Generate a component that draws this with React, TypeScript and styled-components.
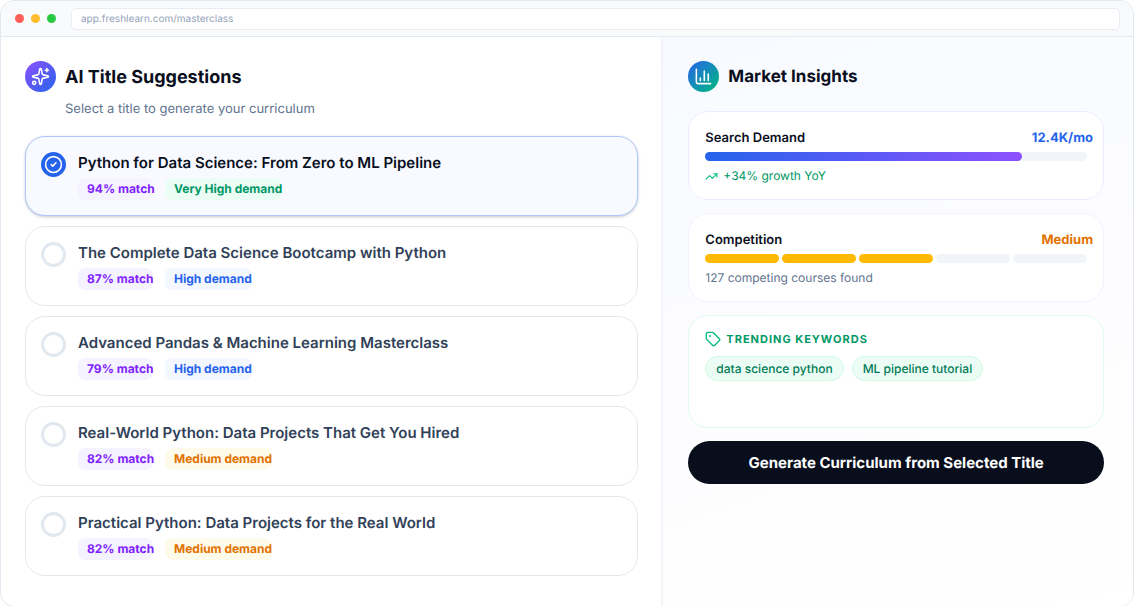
import React, { useState } from "react";
import styled, { createGlobalStyle } from "styled-components";
import { ChartColumn, CircleCheck, Sparkles, Tag, TrendingUp } from "lucide-react";

const GlobalStyle = createGlobalStyle`
  *, *::before, *::after { box-sizing: border-box; }
  body {
    margin: 0;
    background: #fff;
    color: #0a0f1e;
    font-family: Inter, "Liberation Sans", sans-serif;
    text-rendering: geometricPrecision;
  }
  h1, h2, h3, p, ul, fieldset { margin: 0; padding: 0; border: 0; }
  button, input { font-family: inherit; text-rendering: inherit; }
`;

const Window = styled.div`
  display: flex;
  flex-direction: column;
  min-height: 100vh;
  border: 1px solid #e2e8f0;
  border-radius: 14px;
  overflow: hidden;
`;

const BrowserBar = styled.header`
  display: flex;
  align-items: center;
  gap: 15px;
  height: 36px;
  padding: 0 13px 0 14px;
  background: #f8fafc;
  border-bottom: 1px solid #e2e8f0;
`;

const Lights = styled.div`
  display: flex;
  gap: 7px;
`;

const Light = styled.span<{ $color: string }>`
  width: 9px;
  height: 9px;
  border-radius: 50%;
  background: ${(p) => p.$color};
`;

const Address = styled.input`
  flex: 1;
  min-width: 0;
  height: 22px;
  padding: 0 9px;
  border: 1px solid #e8edf3;
  border-radius: 5px;
  background: #fff;
  color: #94a3b8;
  font-size: 10px;
  outline: none;
`;

const Columns = styled.main`
  flex: 1;
  display: grid;
  grid-template-columns: minmax(0, 7fr) minmax(0, 5fr);
`;

const TitlesPanel = styled.section`
  padding: 24px 23px 30px 24px;
`;

const InsightsPanel = styled.section`
  display: flex;
  flex-direction: column;
  padding: 24px 29px 24px 25px;
  border-left: 2px solid #f1f5f9;
  background: linear-gradient(160deg, #f8faff 0%, #fdfdff 60%, #fff 100%);
`;

const PanelHeader = styled.div`
  display: flex;
  align-items: center;
  gap: 9px;
  height: 31px;
`;

const PanelIcon = styled.span<{ $from: string; $to: string }>`
  display: grid;
  place-items: center;
  width: 31px;
  height: 31px;
  border-radius: 50%;
  color: #fff;
  background: linear-gradient(135deg, ${(p) => p.$from}, ${(p) => p.$to});
`;

const TitlesHeading = styled.h1`
  padding-top: 2px;
  font-size: 18px;
  line-height: 31px;
  font-weight: 700;
`;

const InsightsHeading = styled.h2`
  padding-top: 2px;
  font-size: 17px;
  line-height: 31px;
  font-weight: 700;
`;

const Subtitle = styled.p`
  margin: 7px 0 17px 40px;
  font-size: 13px;
  line-height: 20px;
  color: #62748e;
`;

const Options = styled.fieldset`
  display: flex;
  flex-direction: column;
  gap: 10px;
  min-width: 0;
`;

const OptionCard = styled.label<{ $selected: boolean }>`
  display: flex;
  gap: 12px;
  height: 80px;
  padding: 15px;
  border: 1px solid ${(p) => (p.$selected ? "#b0c6fb" : "#e2e8f0")};
  border-radius: 20px;
  background: ${(p) => (p.$selected ? "#f8faff" : "#fff")};
  color: ${(p) => (p.$selected ? "#0a0f1e" : "#314158")};
  box-shadow: ${(p) => (p.$selected ? "0 1px 3px rgba(15, 23, 42, 0.24)" : "none")};
  cursor: pointer;
`;

const RadioWrap = styled.span`
  position: relative;
  flex: none;
  width: 25px;
  height: 25px;

  svg {
    position: absolute;
    inset: 3px;
    color: #fff;
    pointer-events: none;
  }
`;

const Radio = styled.input`
  appearance: none;
  display: block;
  width: 25px;
  height: 25px;
  margin: 0;
  border: 3px solid #e2e8f0;
  border-radius: 50%;
  background: #fff;
  cursor: pointer;

  &:checked {
    border-color: #2563eb;
    background: #2563eb;
  }
`;

const OptionTitle = styled.span`
  display: block;
  font-size: 15px;
  line-height: 22px;
  font-weight: 600;
`;

const Badges = styled.span`
  display: flex;
  gap: 12px;
  margin-top: 4px;
`;

const Badge = styled.span<{ $tone: Tone }>`
  height: 22px;
  padding: 0 0 0 9px;
  border-radius: 7px;
  font-size: 12px;
  line-height: 22px;
  font-weight: 700;
  white-space: nowrap;
  color: ${(p) => tones[p.$tone].text};
  background: ${(p) => tones[p.$tone].fill};
`;

const MatchBadge = styled(Badge)`
  width: 75px;
`;

const Cards = styled.div`
  display: flex;
  flex-direction: column;
  gap: 13px;
  margin-top: 19px;
`;

const InsightCard = styled.article<{ $border: string }>`
  min-height: 89px;
  padding: 15px 16px 11px;
  border: 1px solid ${(p) => p.$border};
  border-radius: 20px;
  background: #fff;
`;

const KeywordCard = styled(InsightCard)`
  min-height: 113px;
`;

const CardHeader = styled.div`
  display: flex;
  justify-content: space-between;
  margin-right: -6px;
  font-size: 13px;
  line-height: 22px;
`;

const CardTitle = styled.h3`
  font-size: 13px;
  font-weight: 600;
`;

const CardValue = styled.span<{ $color: string }>`
  font-weight: 700;
  color: ${(p) => p.$color};
`;

const Track = styled.div`
  height: 9px;
  margin-top: 3px;
  border-radius: 5px;
  background: #f1f5f9;
`;

const Fill = styled.div`
  height: 9px;
  border-radius: 5px;
  background: linear-gradient(90deg, #2563eb, #8e51ff);
`;

const Segments = styled.div`
  display: flex;
  gap: 3px;
  margin-top: 3px;
`;

const Segment = styled.span<{ $on: boolean }>`
  flex: 1;
  height: 9px;
  border-radius: 5px;
  background: ${(p) => (p.$on ? "#ffb900" : "#f1f5f9")};
`;

const Note = styled.p<{ $color: string }>`
  display: flex;
  align-items: center;
  gap: 5px;
  margin-top: 5px;
  font-size: 12px;
  line-height: 20px;
  color: ${(p) => p.$color};
`;

const KeywordHeading = styled.h3`
  display: flex;
  align-items: center;
  gap: 5px;
  font-size: 11px;
  line-height: 16px;
  font-weight: 700;
  letter-spacing: 1px;
  color: #009966;
`;

const Keywords = styled.ul`
  display: flex;
  flex-wrap: wrap;
  gap: 8px;
  margin-top: 9px;
  list-style: none;
`;

const Keyword = styled.li`
  height: 25px;
  padding: 0 10px;
  border: 1px solid #d0fae5;
  border-radius: 13px;
  background: #ecfdf5;
  color: #007a55;
  font-size: 12px;
  line-height: 23px;
  font-weight: 500;
`;

const GenerateButton = styled.button`
  height: 43px;
  margin-top: 13px;
  border: 0;
  border-radius: 22px;
  background: #080e1c;
  color: #fff;
  font-size: 15px;
  font-weight: 700;
  cursor: pointer;
`;

type Tone = "violet" | "green" | "blue" | "amber";

const tones: Record<Tone, { text: string; fill: string }> = {
  violet: { text: "#7f22fe", fill: "#f5f3ff" },
  green: { text: "#009966", fill: "#ecfdf5" },
  blue: { text: "#2563eb", fill: "#f3f7ff" },
  amber: { text: "#e17100", fill: "#fffbeb" },
};

const titles: { name: string; match: number; demand: string; tone: Tone }[] = [
  { name: "Python for Data Science: From Zero to ML Pipeline", match: 94, demand: "Very High", tone: "green" },
  { name: "The Complete Data Science Bootcamp with Python", match: 87, demand: "High", tone: "blue" },
  { name: "Advanced Pandas & Machine Learning Masterclass", match: 79, demand: "High", tone: "blue" },
  { name: "Real-World Python: Data Projects That Get You Hired", match: 82, demand: "Medium", tone: "amber" },
  { name: "Practical Python: Data Projects for the Real World", match: 82, demand: "Medium", tone: "amber" },
];

const keywords = ["data science python", "ML pipeline tutorial"];

export default function App() {
  const [selected, setSelected] = useState(0);

  return (
    <>
      <GlobalStyle />
      <Window>
        <BrowserBar>
          <Lights>
            <Light $color="#ff5f57" />
            <Light $color="#febc2e" />
            <Light $color="#28c840" />
          </Lights>
          <Address aria-label="Address" defaultValue="app.freshlearn.com/masterclass" />
        </BrowserBar>
        <Columns>
          <TitlesPanel>
            <PanelHeader>
              <PanelIcon $from="#8e51ff" $to="#2563eb">
                <Sparkles size={19} strokeWidth={2} />
              </PanelIcon>
              <TitlesHeading>AI Title Suggestions</TitlesHeading>
            </PanelHeader>
            <Subtitle>Select a title to generate your curriculum</Subtitle>
            <Options aria-label="Title suggestions">
              {titles.map((title, i) => (
                <OptionCard key={title.name} $selected={i === selected}>
                  <RadioWrap>
                    <Radio
                      type="radio"
                      name="title"
                      checked={i === selected}
                      onChange={() => setSelected(i)}
                    />
                    {i === selected && <CircleCheck size={19} strokeWidth={2} />}
                  </RadioWrap>
                  <span>
                    <OptionTitle>{title.name}</OptionTitle>
                    <Badges>
                      <MatchBadge $tone="violet">{`${title.match}% match`}</MatchBadge>
                      <Badge $tone={title.tone}>{`${title.demand} demand`}</Badge>
                    </Badges>
                  </span>
                </OptionCard>
              ))}
            </Options>
          </TitlesPanel>
          <InsightsPanel>
            <PanelHeader>
              <PanelIcon $from="#2563eb" $to="#00bc7d">
                <ChartColumn size={19} strokeWidth={2} />
              </PanelIcon>
              <InsightsHeading>Market Insights</InsightsHeading>
            </PanelHeader>
            <Cards>
              <InsightCard $border="#e9eefe">
                <CardHeader>
                  <CardTitle>Search Demand</CardTitle>
                  <CardValue $color="#2563eb">12.4K/mo</CardValue>
                </CardHeader>
                <Track>
                  <Fill style={{ width: "83%" }} />
                </Track>
                <Note $color="#009966">
                  <TrendingUp size={13} color="#00bc7d" />
                  +34% growth YoY
                </Note>
              </InsightCard>
              <InsightCard $border="#f3f1fe">
                <CardHeader>
                  <CardTitle>Competition</CardTitle>
                  <CardValue $color="#e17100">Medium</CardValue>
                </CardHeader>
                <Segments>
                  {[0, 1, 2, 3, 4].map((n) => (
                    <Segment key={n} $on={n < 3} />
                  ))}
                </Segments>
                <Note $color="#62748e">127 competing courses found</Note>
              </InsightCard>
              <KeywordCard $border="#dffbee">
                <KeywordHeading>
                  <Tag size={16} strokeWidth={2} color="#00bc7d" />
                  TRENDING KEYWORDS
                </KeywordHeading>
                <Keywords>
                  {keywords.map((word) => (
                    <Keyword key={word}>{word}</Keyword>
                  ))}
                </Keywords>
              </KeywordCard>
            </Cards>
            <GenerateButton type="button">Generate Curriculum from Selected Title</GenerateButton>
          </InsightsPanel>
        </Columns>
      </Window>
    </>
  );
}
